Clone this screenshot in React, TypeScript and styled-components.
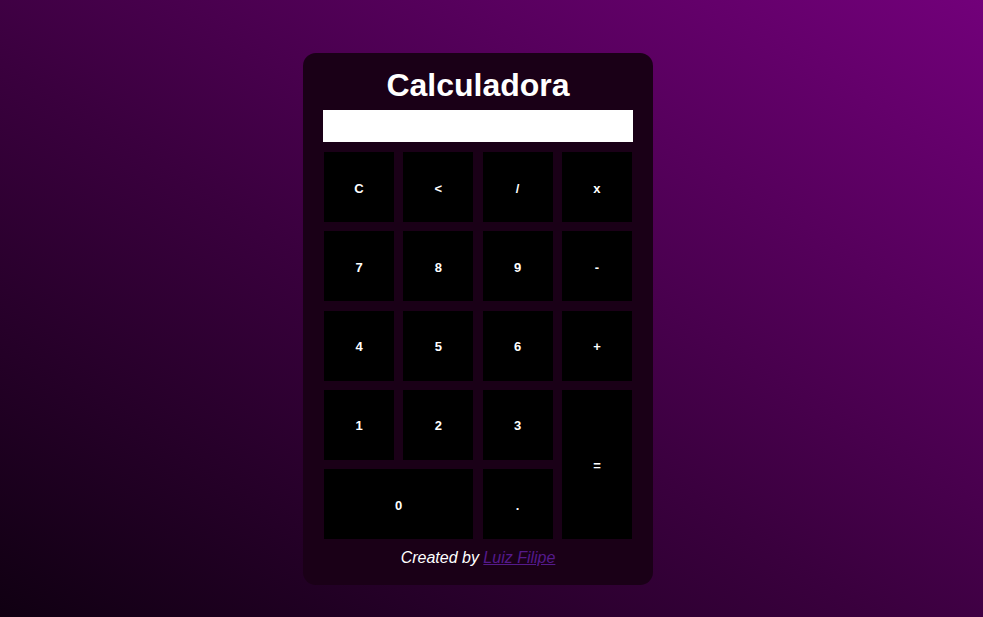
import React from "react";
import styled, { createGlobalStyle } from "styled-components";

const Global = createGlobalStyle`
  html, body { margin: 0; padding: 0; }
  body {
    font-family: "Liberation Sans", Arial, sans-serif;
    background: linear-gradient(to top right, #100012 0%, #3a003e 45%, #72007a 100%);
    min-height: 100vh;
  }
`;

const Page = styled.div`
  min-height: 617px;
  display: flex;
  justify-content: center;
  align-items: flex-start;
  padding: 53px 27px 0 0;
  box-sizing: border-box;
`;

const Card = styled.div`
  width: 350px;
  box-sizing: border-box;
  padding: 14px 20px 18px;
  background: #1a0017;
  border-radius: 13px;
  display: flex;
  flex-direction: column;
`;

const Title = styled.h1`
  margin: 0 0 6px;
  font-size: 32px;
  line-height: 37px;
  font-weight: 700;
  color: #ffffff;
  text-align: center;
`;

const Display = styled.input`
  height: 32px;
  border: none;
  outline: none;
  padding: 0 8px;
  margin: 0 0 10px;
  background: #ffffff;
  box-sizing: border-box;
  width: 100%;
  font-family: "Liberation Sans", Arial, sans-serif;
  font-size: 18px;
`;

const Keys = styled.div`
  display: grid;
  grid-template-columns: repeat(4, 70px);
  grid-auto-rows: 70px;
  justify-content: space-between;
  row-gap: 9.25px;
  padding: 0 1px;
`;

const Key = styled.button<{ $wide?: boolean; $tall?: boolean }>`
  background: #000000;
  border: none;
  color: #ffffff;
  font-family: "Liberation Sans", Arial, sans-serif;
  font-weight: 700;
  font-size: 13px;
  cursor: pointer;
  padding: 2px 0 0;
  grid-column: ${(p) => (p.$wide ? "span 2" : "auto")};
  grid-row: ${(p) => (p.$tall ? "span 2" : "auto")};
`;

const Footer = styled.p`
  margin: 10px 0 0;
  font-style: italic;
  font-size: 16px;
  line-height: 18px;
  color: #ffffff;
  text-align: center;
`;

const Link = styled.a`
  color: #551a8b;
  text-decoration: underline;
`;

export default function App() {
  return (
    <>
      <Global />
      <Page>
        <Card>
          <Title>Calculadora</Title>
          <Display type="text" readOnly />
          <Keys>
            <Key>C</Key>
            <Key>&lt;</Key>
            <Key>/</Key>
            <Key>x</Key>
            <Key>7</Key>
            <Key>8</Key>
            <Key>9</Key>
            <Key>-</Key>
            <Key>4</Key>
            <Key>5</Key>
            <Key>6</Key>
            <Key>+</Key>
            <Key>1</Key>
            <Key>2</Key>
            <Key>3</Key>
            <Key $tall>=</Key>
            <Key $wide>0</Key>
            <Key>.</Key>
          </Keys>
          <Footer>
            Created by <Link href="#">Luiz Filipe</Link>
          </Footer>
        </Card>
      </Page>
    </>
  );
}
